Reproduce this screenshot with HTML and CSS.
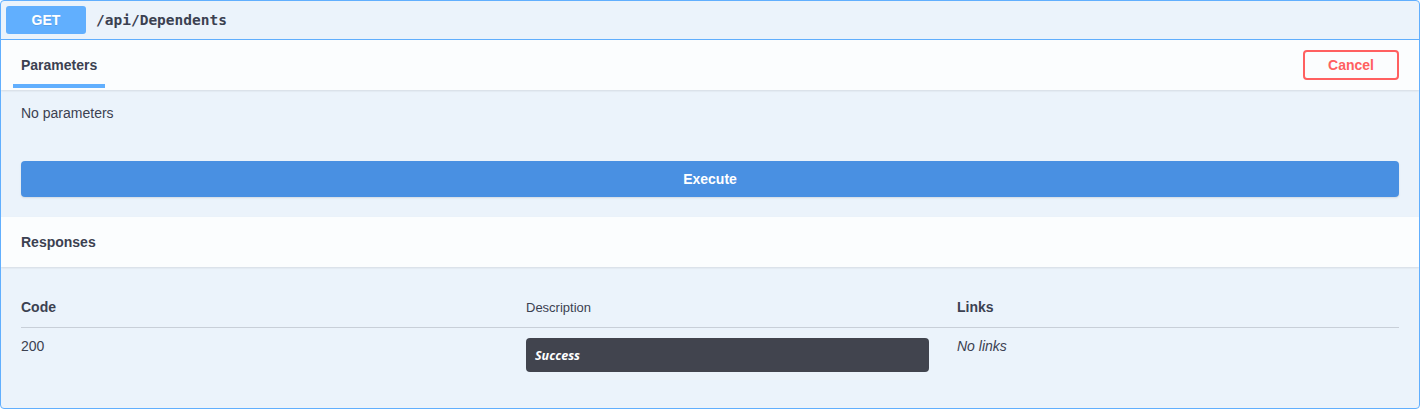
FILE: index.html
```html
<!DOCTYPE html>
<html>
<head>
<meta charset="utf-8">
<link rel="stylesheet" href="styles.css">
</head>
<body>
<div class="opblock">
  <div class="summary">
    <span class="method">GET</span>
    <span class="path">/api/Dependents</span>
  </div>
  <div class="section-header">
    <div class="tab">Parameters</div>
    <button class="btn-cancel">Cancel</button>
  </div>
  <div class="params-body">
    <p class="no-params">No parameters</p>
  </div>
  <div class="execute-wrapper">
    <button class="btn-execute">Execute</button>
  </div>
  <div class="responses-header">
    <h4>Responses</h4>
  </div>
  <div class="responses-inner">
    <div class="resp-table">
      <div class="row head">
        <div class="cell col-code">Code</div>
        <div class="cell col-desc">Description</div>
        <div class="cell col-links">Links</div>
      </div>
      <div class="row body">
        <div class="cell col-code val">200</div>
        <div class="cell col-desc"><div class="markdown">Success</div></div>
        <div class="cell col-links val"><i>No links</i></div>
      </div>
    </div>
  </div>
</div>
</body>
</html>
```

FILE: styles.css
```css
* { box-sizing: border-box; }
html, body { margin: 0; padding: 0; background: #ffffff; }
body {
  font-family: "Liberation Sans", Arial, sans-serif;
  color: #3b4151;
  width: 1420px;
  height: 409px;
}
.opblock {
  width: 1420px;
  height: 409px;
  border: 1px solid #61affe;
  border-radius: 4px;
  background: #ebf3fb;
  overflow: hidden;
}
.summary {
  display: flex;
  align-items: center;
  padding: 5px;
  height: 39px;
  border-bottom: 1px solid #61affe;
}
.method {
  display: flex;
  align-items: center;
  justify-content: center;
  width: 80px;
  height: 28px;
  background: #61affe;
  border-radius: 3px;
  color: #fff;
  font-weight: 700;
  font-size: 14px;
  text-shadow: 0 1px 0 rgba(0,0,0,.1);
}
.path {
  padding: 0 10px;
  font-family: "DejaVu Sans Mono", "Liberation Mono", monospace;
  font-weight: 700;
  font-size: 14.5px;
  color: #3b4151;
}
.section-header {
  display: flex;
  align-items: center;
  justify-content: space-between;
  height: 50px;
  padding: 0 20px 0 12px;
  background: rgba(255,255,255,.8);
  box-shadow: 0 1px 2px rgba(0,0,0,.1);
  position: relative;
}
.tab {
  align-self: stretch;
  display: flex;
  align-items: center;
  padding: 0 8px 1px 8px;
  font-size: 14px;
  font-weight: 700;
  position: relative;
}
.tab::after {
  content: "";
  position: absolute;
  left: 0;
  right: 0;
  bottom: 2px;
  height: 4px;
  background: #61affe;
}
.btn-cancel {
  width: 96px;
  height: 30px;
  border: 2px solid #ff6060;
  border-radius: 4px;
  background: transparent;
  color: #ff6060;
  font-family: "Liberation Sans", Arial, sans-serif;
  font-size: 14px;
  font-weight: 700;
}
.params-body {
  padding: 15px 20px 0 20px;
}
.no-params {
  margin: 0;
  font-size: 14px;
  line-height: 16px;
}
.execute-wrapper {
  padding: 40px 20px 20px 20px;
}
.btn-execute {
  display: block;
  width: 100%;
  height: 36px;
  border: none;
  border-radius: 4px;
  background: #4990e2;
  color: #fff;
  font-family: "Liberation Sans", Arial, sans-serif;
  font-size: 14px;
  font-weight: 700;
  box-shadow: 0 1px 2px rgba(0,0,0,.1);
}
.responses-header {
  height: 50px;
  display: flex;
  align-items: center;
  padding: 0 20px;
  background: rgba(255,255,255,.8);
  box-shadow: 0 1px 2px rgba(0,0,0,.1);
}
.responses-header h4 {
  margin: 0;
  font-size: 14px;
  font-weight: 700;
}
.responses-inner {
  padding: 20px 20px 0 20px;
}
.row {
  display: grid;
  grid-template-columns: 505px 431px 1fr;
}
.row.head {
  height: 41px;
  border-bottom: 1px solid rgba(59,65,81,.2);
  align-items: center;
}
.row.head .cell {
  font-size: 14px;
  font-weight: 700;
}
.row.head .col-desc {
  font-size: 13px;
  font-weight: 400;
}
.row.body {
  padding-top: 10px;
}
.val {
  font-size: 14px;
  line-height: 16px;
}
.markdown {
  width: 403px;
  height: 34px;
  background: #41444e;
  border-radius: 4px;
  color: #fff;
  font-family: "Open Sans", "DejaVu Sans", sans-serif;
  font-style: italic;
  font-weight: 700;
  font-size: 12.5px;
  padding: 1px 9px 0 9px;
  display: flex;
  align-items: center;
}
```
